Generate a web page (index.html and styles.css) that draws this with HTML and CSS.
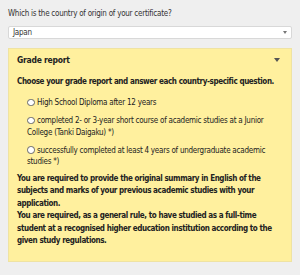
FILE: index.html
```html
<!DOCTYPE html>
<html lang="en">
<head>
    <meta charset="UTF-8">
    <meta name="viewport" content="width=device-width, initial-scale=1.0">
    <title>Country of origin</title>
    <link rel="stylesheet" href="styles.css">
</head>
<body>
    <p class="question">Which is the country of origin of your certificate?</p>

    <!-- Country select -->
    <div class="select">
        <span>Japan</span>
        <span class="caret"></span>
    </div>

    <!-- Grade report panel -->
    <div class="panel">
        <div class="panel-head">
            <h2>Grade report</h2>
            <span class="caret dark"></span>
        </div>
        <p class="strong">Choose your grade report and answer each country-specific question.</p>
        <ul class="options">
            <li><span class="radio"></span>High School Diploma after 12 years</li>
            <li><span class="radio"></span>completed 2- or 3-year short course of academic studies at a Junior College (Tanki Daigaku) *)</li>
            <li><span class="radio"></span>successfully completed at least 4 years of undergraduate academic studies *)</li>
        </ul>
        <p class="strong notes">You are required to provide the original summary in English of the subjects and marks of your previous academic studies with your application.<br>
        You are required, as a general rule, to have studied as a full-time student at a recognised higher education institution according to the given study regulations.</p>
    </div>
</body>
</html>
```

FILE: styles.css
```css
body {
    margin: 0;
    padding: 8px;
    background-color: #efefef;
    color: #333;
    font-family: "DejaVu Sans Condensed", "DejaVu Sans", sans-serif;
    font-size: 8px;
    letter-spacing: -0.25px;
}
.question {
    margin: 0 0 6px;
    line-height: 12px;
}
.select {
    display: flex;
    justify-content: space-between;
    align-items: center;
    height: 11px;
    padding: 0 4px;
    background-color: #fff;
    border: 1px solid #d8d8d8;
    border-radius: 2px;
}
.caret {
    width: 0;
    height: 0;
    border-left: 2.5px solid transparent;
    border-right: 2.5px solid transparent;
    border-top: 3px solid #777;
}
.caret.dark {
    border-left-width: 3.5px;
    border-right-width: 3.5px;
    border-top: 4px solid #555;
    margin-right: 3px;
}
.panel {
    margin-top: 9px;
    padding: 5px 8px 13px;
    background-color: #fff09e;
    border: 1px solid #efe3a2;
    color: #222;
}
.panel-head {
    display: flex;
    justify-content: space-between;
    align-items: center;
    margin-bottom: 10px;
}
h2 {
    margin: 0;
    font-size: 8.5px;
    line-height: 12px;
}
.strong {
    margin: 0;
    font-weight: bold;
    line-height: 12px;
    letter-spacing: -0.4px;
}
.notes {
    line-height: 12.6px;
}
.options {
    list-style: none;
    margin: 9px 0 5px;
    padding: 0 0 0 10px;
    line-height: 11.5px;
}
.options li {
    margin-bottom: 6.5px;
}
.options li:last-child {
    margin-bottom: 0;
}
.radio {
    display: inline-block;
    width: 5.5px;
    height: 5.5px;
    margin-right: 2.5px;
    vertical-align: -1px;
    background-color: #fff;
    border: 0.8px solid #666;
    border-radius: 50%;
}
```
